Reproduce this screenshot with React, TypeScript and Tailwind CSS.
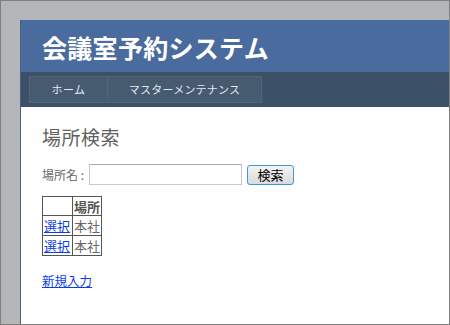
import React from "react"

const font = { fontFamily: '"Noto Sans CJK JP", "Noto Sans", sans-serif' }

export default function App() {
  return (
    <div
      className="w-[450px] h-[325px] border border-[#7f7f7f] bg-[#b5b6ba] pt-[19px] pl-[19px] flex overflow-hidden"
      style={font}
    >
      <div className="flex-1 flex flex-col bg-white border-l border-[#4b5f7c]">
        <header className="h-[52px] bg-[#4a6b9e] flex items-center pl-[21px]">
          <h1 className="text-[25px] font-bold text-white leading-none tracking-[0.3px] mt-[2px]">
            会議室予約システム
          </h1>
        </header>

        <nav className="h-[35px] bg-[#3c5067] flex items-center pl-[8px]">
          <a className="h-[27px] w-[79px] flex items-center justify-center bg-[#465a70] border border-[#506579] text-[11px] tracking-[0.4px] text-[#e6e9ee]">
            ホーム
          </a>
          <a className="h-[27px] w-[154px] flex items-center justify-center bg-[#465a70] border border-l-0 border-[#506579] text-[11px] tracking-[0.2px] text-[#e6e9ee]">
            マスターメンテナンス
          </a>
        </nav>

        <main className="flex-1 pl-[21px] pt-[18px] text-[#666]">
          <h2 className="text-[19px] leading-[24px] text-[#5f5f5f] tracking-[0.5px]">場所検索</h2>

          <div className="flex items-center mt-[15px] text-[12px]">
            <span>場所名 :</span>
            <input
              type="text"
              className="w-[153px] h-[21px] ml-[5px] border border-[#c6c9cf] border-t-[#a8abb0] bg-white outline-none"
            />
            <button className="ml-[5px] w-[47px] h-[20px] rounded-[3px] border border-[#3c9bd6] bg-gradient-to-b from-[#f4f4f4] to-[#dadada] text-[13px] leading-none text-black">
              検索
            </button>
          </div>

          <table className="mt-[11px] border-collapse text-[13px] leading-[17px]">
            <thead>
              <tr className="h-[19px]">
                <th className="border border-[#555] w-[30px]"></th>
                <th className="border border-[#555] w-[29px] font-bold text-[#555] px-0 text-left pl-px">場所</th>
              </tr>
            </thead>
            <tbody>
              {["本社", "本社"].map((place, i) => (
                <tr key={i} className="h-[20px]">
                  <td className="border border-[#555] px-0 pl-px">
                    <a href="#" className="text-[#0b3de6] underline">選択</a>
                  </td>
                  <td className="border border-[#555] px-0 pl-px">{place}</td>
                </tr>
              ))}
            </tbody>
          </table>

          <a href="#" className="inline-block mt-[16px] text-[12.5px] text-[#0b3de6] underline">
            新規入力
          </a>
        </main>
      </div>
    </div>
  )
}
